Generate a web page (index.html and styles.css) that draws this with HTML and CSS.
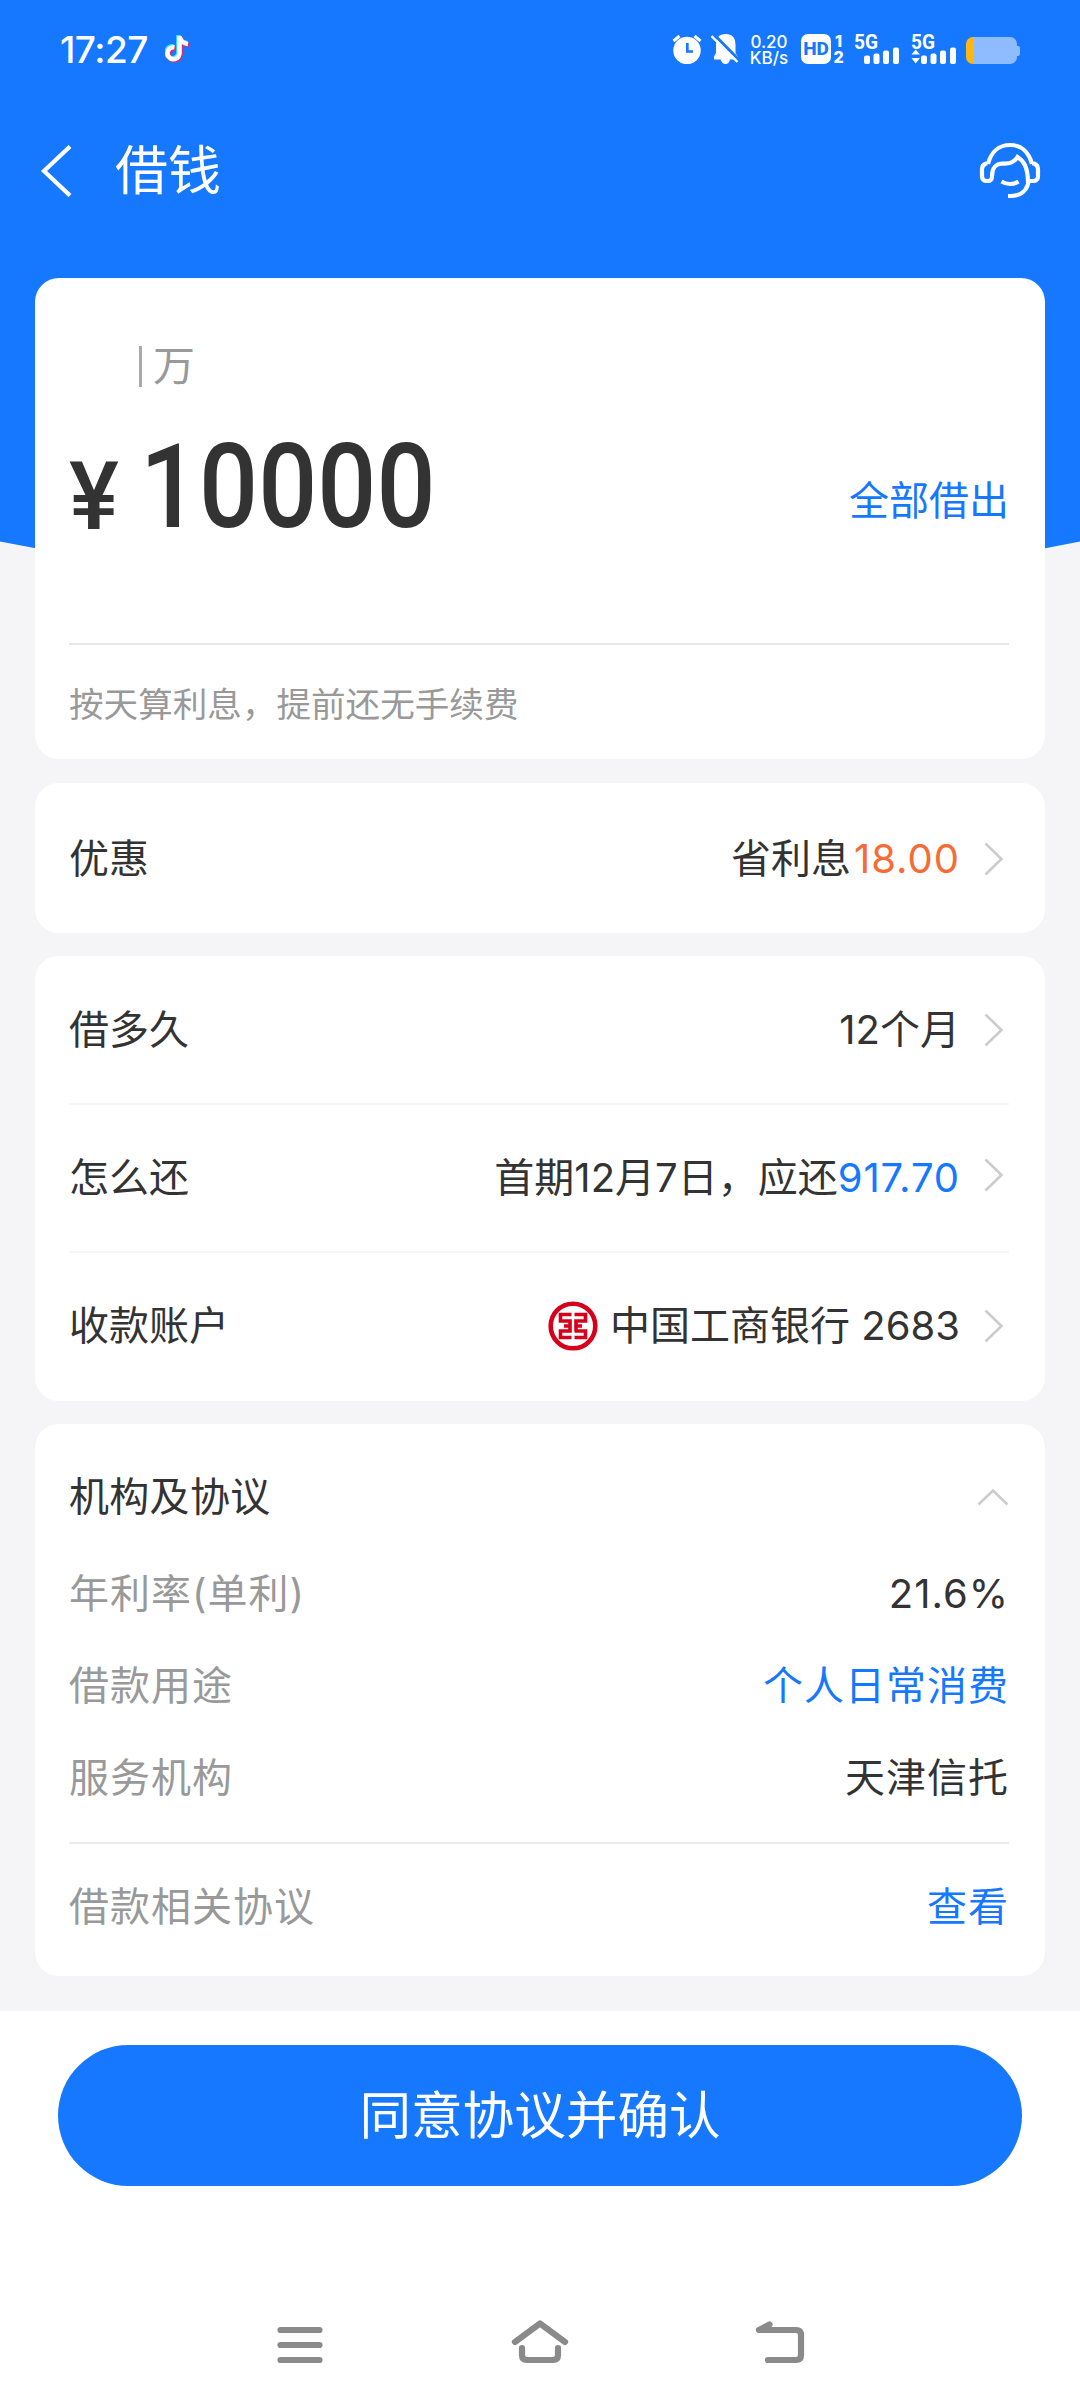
FILE: index.html
```html
<!DOCTYPE html>
<html lang="zh-CN">
<head>
<meta charset="utf-8">
<title>借钱</title>
<link rel="stylesheet" href="styles.css">
</head>
<body>
<div class="page">
  <svg class="backdrop" width="1080" height="580" viewBox="0 0 1080 580"><path d="M0 0H1080V541.500Q540 650 0 541.500Z" fill="#1677ff"/></svg>

  <header class="top">
    <div class="status">
      <span class="time">17:27</span>
      <svg class="note" width="26" height="30" viewBox="0 0 26 30" fill="none" stroke-width="4.600">
        <g stroke="#2af0ea" transform="translate(-1 -1)"><path d="M14.500 2V19.500A6 6 0 1 1 9.500 13.300M14.500 2.500C15.500 7 18.500 9.500 23 10"/></g>
        <g stroke="#ff1f50" transform="translate(1 1)"><path d="M14.500 2V19.500A6 6 0 1 1 9.500 13.300M14.500 2.500C15.500 7 18.500 9.500 23 10"/></g>
        <path stroke="#fff" d="M14.500 2V19.500A6 6 0 1 1 9.500 13.300M14.500 2.500C15.500 7 18.500 9.500 23 10"/>
      </svg>
      <div class="indicators">
        <svg width="30" height="30" viewBox="0 0 30 30"><circle cx="15" cy="16.500" r="13.700" fill="#fff"/><path d="M1.500 7L7.500 2M28.500 7L22.500 2" stroke="#fff" stroke-width="3"/><path d="M15.300 9V17.500H21" fill="none" stroke="#1677ff" stroke-width="2.700"/></svg>
        <svg class="bell" width="28" height="30" viewBox="0 0 28 30"><path d="M3 25.500V22.500L5 19V11Q5 0 14.500 0Q24.500 0 24.500 11V19L27 23V25.500H19Q18 30 14.500 30Q11 30 9.500 25.500Z" fill="#fff"/><path d="M2.500 0L29 27" stroke="#1677ff" stroke-width="3"/><path d="M0.500 2L26.500 28" stroke="#fff" stroke-width="2.400"/></svg>
        <div class="speed"><span>0.20</span><span>KB/s</span></div>
        <div class="hd">HD</div>
        <div class="sims"><span>1</span><span>2</span></div>
        <svg class="signal" width="46" height="30" viewBox="0 0 46 30">
          <text x="0" y="14.500" textLength="24" lengthAdjust="spacingAndGlyphs">5G</text>
          <rect x="10" y="21.500" width="6" height="8.500" rx="2"/><rect x="19.500" y="19.500" width="6" height="10.500" rx="2"/><rect x="29" y="16.500" width="6" height="13.500" rx="2"/><rect x="39" y="13.500" width="6" height="16.500" rx="2"/>
        </svg>
        <svg class="signal" width="46" height="30" viewBox="0 0 46 30">
          <text x="0" y="14.500" textLength="24" lengthAdjust="spacingAndGlyphs">5G</text>
          <path d="M0.500 20.500L4.700 15.500L9 20.500ZM0.500 24L4.700 29.500L9 24Z"/>
          <rect x="10" y="21.500" width="6" height="8.500" rx="2"/><rect x="19.500" y="19.500" width="6" height="10.500" rx="2"/><rect x="29" y="16.500" width="6" height="13.500" rx="2"/><rect x="39" y="13.500" width="6" height="16.500" rx="2"/>
        </svg>
        <div class="battery"><div class="cell"></div><div class="nub"></div></div>
      </div>
    </div>
    <div class="nav">
      <svg width="32" height="52" viewBox="0 0 32 52"><path d="M30 1.500L4 26L30 50.500" fill="none" stroke="#fff" stroke-width="4.200"/></svg>
      <h1>借钱</h1>
      <svg class="service" width="62" height="58" viewBox="0 0 62 58" fill="none" stroke="#fff" stroke-width="4.200"><path d="M9 22C12 10 20 3 31 3S50 10 53 22M8.500 21.500H7Q3 23 3 27V34Q3 39 8 39H9Q13 39 13 34C13 26 17 21.500 23.500 21.500C30 22 35 21 38.500 15C45 19 48.500 25 49 39H54Q59 39 59 34V27Q59 23 55 21.500H53M50 37C49 48 42 54 32 54H29M22.500 39.500Q31 44.500 39.500 39.500"/></svg>
    </div>
  </header>

  <main>
    <section class="card amount-card">
      <div class="unit"><i></i><span>万</span></div>
      <div class="amount">
        <span class="yen">¥</span>
        <span class="digits">10000</span>
        <a class="all">全部借出</a>
      </div>
      <p class="hint">按天算利息，提前还无手续费</p>
    </section>

    <section class="card offer">
      <div class="row"><span>优惠</span><span class="value">省利息<b class="orange">18.00</b></span><svg class="chev" width="20" height="34" viewBox="0 0 20 34"><path d="M1.500 1.500L17.500 17L1.500 32.500"/></svg></div>
    </section>

    <section class="card plan">
      <div class="row"><span>借多久</span><span class="value"><b>12</b>个月</span><svg class="chev" width="20" height="34" viewBox="0 0 20 34"><path d="M1.500 1.500L17.500 17L1.500 32.500"/></svg></div>
      <div class="row"><span>怎么还</span><span class="value">首期<b>12</b>月<b>7</b>日，应还<b class="blue sum">917.70</b></span><svg class="chev raised" width="20" height="34" viewBox="0 0 20 34"><path d="M1.500 1.500L17.500 17L1.500 32.500"/></svg></div>
      <div class="row"><span>收款账户</span>
        <span class="value"><svg class="bank" width="50" height="50" viewBox="0 0 50 50"><circle cx="25" cy="25" r="22.300" fill="none" stroke="#d7001b" stroke-width="4.600"/><path fill="none" stroke="#d7001b" stroke-width="3.600" d="M23.500 13.500H12.500V20H22V25H16M23.500 36.500H12.500V30H22V25M26.500 13.500H37.500V20H28V25H34M26.500 30H37.500V36.500H26.500M28 25V30"/></svg>中国工商银行 <b>2683</b></span>
        <svg class="chev" width="20" height="34" viewBox="0 0 20 34"><path d="M1.500 1.500L17.500 17L1.500 32.500"/></svg></div>
    </section>

    <section class="card terms">
      <div class="line head"><span>机构及协议</span><svg class="chev up" width="32" height="18" viewBox="0 0 32 18"><path d="M1.500 16.500L16 2.500L30.500 16.500"/></svg></div>
      <div class="line"><label>年利率(单利)</label><span class="num">21.6%</span></div>
      <div class="line"><label>借款用途</label><span class="blue">个人日常消费</span></div>
      <div class="line"><label>服务机构</label><span>天津信托</span></div>
      <div class="line foot"><label>借款相关协议</label><span class="blue">查看</span></div>
    </section>
  </main>

  <footer>
    <button class="confirm">同意协议并确认</button>
    <div class="keys">
      <svg width="60" height="46" viewBox="0 0 60 46"><path d="M10.500 10H49.500M10.500 25H49.500M10.500 40H49.500"/></svg>
      <svg width="60" height="46" viewBox="0 0 60 46"><path d="M5 22L30 3.500L55 22M12 28V35Q12 40 17 40H43Q48 40 48 35V28"/></svg>
      <svg width="60" height="46" viewBox="0 0 60 46"><path d="M19.500 4.500L9 10H46Q51 10 51 15V35Q51 40 46 40H18"/></svg>
    </div>
  </footer>
</div>
</body>
</html>
```
FILE: styles.css
```css
* { box-sizing: border-box; margin: 0; padding: 0; }
body { font-family: Inter, "Noto Sans CJK SC", sans-serif; font-size: 40px; color: #333; background: #f5f5f7; }
.page { position: relative; width: 1080px; height: 2408px; display: flex; flex-direction: column; overflow: hidden; }
.backdrop { position: absolute; left: 0; top: 0; }
svg { display: block; flex: none; }

.top { position: relative; height: 278px; color: #fff; }
.status { height: 98px; padding: 0 60px; display: flex; align-items: center; }
.time { font-size: 37px; font-weight: 500; letter-spacing: -.5px; width: 105px; white-space: nowrap; }
.indicators { margin-left: auto; display: flex; align-items: center; }
.bell { margin-left: 9px; }
.speed { width: 38px; margin-left: 11px; display: flex; flex-direction: column; align-items: center; font-size: 17px; line-height: 16px; font-weight: 500; white-space: nowrap; margin-top: 2px; }
.hd { margin-left: 13px; width: 30px; height: 30px; border-radius: 7px; background: #fff; color: #1677ff; font: 800 19px/30px Roboto, sans-serif; text-align: center; }
.sims { margin-left: 2px; width: 11px; font-size: 16px; line-height: 16px; font-weight: 800; display: flex; flex-direction: column; align-items: center; }
.signal { margin-left: 10px; fill: #fff; overflow: visible; }
.signal + .signal { margin-left: 11px; }
.signal text { font: 700 20px Roboto, sans-serif; }
.battery { margin-left: 9px; display: flex; align-items: center; padding-top: 3px; }
.cell { width: 51px; height: 27px; border-radius: 7px; background: linear-gradient(90deg, #ffb60e 8px, #8fbcff 8px); }
.nub { width: 3px; height: 10px; border-radius: 0 2px 2px 0; background: #8fbcff; }
.nav { height: 146px; padding: 0 39px 0 40px; display: flex; align-items: center; }
h1 { margin-left: 43px; font-size: 53px; font-weight: 400; line-height: 70px; }
.service { margin-left: auto; }

main { position: relative; height: 1733px; padding: 0 35px; }
.card { background: #fff; border-radius: 24px; padding: 0 36px 0 34px; }
.amount-card { height: 481px; padding-top: 64px; }
.unit { height: 48px; padding-left: 70px; display: flex; align-items: center; gap: 11px; color: #999; }
.unit i { width: 3px; height: 41px; background: #aaa; }
.unit span { font-size: 42px; line-height: 48px; }
.amount { height: 255px; border-bottom: 2px solid #e8e8e8; display: flex; align-items: flex-start; }
.yen { width: 71px; font: 500 94px/100px Roboto, sans-serif; padding-top: 57px; white-space: nowrap; }
.digits { font: 500 117px/120px Roboto, sans-serif; padding-top: 37px; transform: scaleX(.889); transform-origin: left; }
.all { margin-left: auto; padding-top: 81px; line-height: 60px; color: #1677ff; }
.hint { font-size: 34.600px; line-height: 60px; padding-top: 29px; color: #999; }

.offer { margin-top: 24px; height: 150px; padding-top: 2px; }
.plan { margin-top: 23px; height: 445px; }
.row { height: 148px; display: flex; align-items: center; line-height: 60px; }
.plan .row:first-child { height: 147px; }
.plan .row + .row { border-top: 2px solid #f6f6f6; }
.value { margin-left: auto; display: flex; align-items: center; white-space: pre; }
b { font-weight: 400; }
.orange { color: #f56c36; letter-spacing: 1px; margin-left: 3px; }
.blue { color: #1677ff; }
.sum { letter-spacing: .9px; }
.chev { margin: 0 5px 0 24px; fill: none; stroke: #ccc; stroke-width: 2.600; }
.raised { transform: translateY(-3px); }
.bank { margin-right: 12px; }

.terms { margin-top: 23px; height: 552px; padding-top: 25px; }
.line { height: 92px; display: flex; justify-content: space-between; align-items: center; line-height: 60px; letter-spacing: 1px; }
.line label { color: #999; }
.head { letter-spacing: .3px; height: 96px; margin-bottom: 3px; }
.up { margin: 0; }
.foot { height: 127px; margin-top: 18px; border-top: 2px solid #ebebeb; }

footer { position: relative; height: 397px; background: #fff; padding: 34px 58px 0; }
.confirm { display: block; width: 964px; height: 141px; border: 0; border-radius: 71px; background: #1677ff; color: #fff; font: 400 51.600px/141px Inter, "Noto Sans CJK SC", sans-serif; }
.keys { display: flex; justify-content: space-between; padding: 134px 212px 0; }
.keys svg { fill: none; stroke: #8a8a8a; stroke-width: 6.200; stroke-linecap: round; stroke-linejoin: round; }
```
